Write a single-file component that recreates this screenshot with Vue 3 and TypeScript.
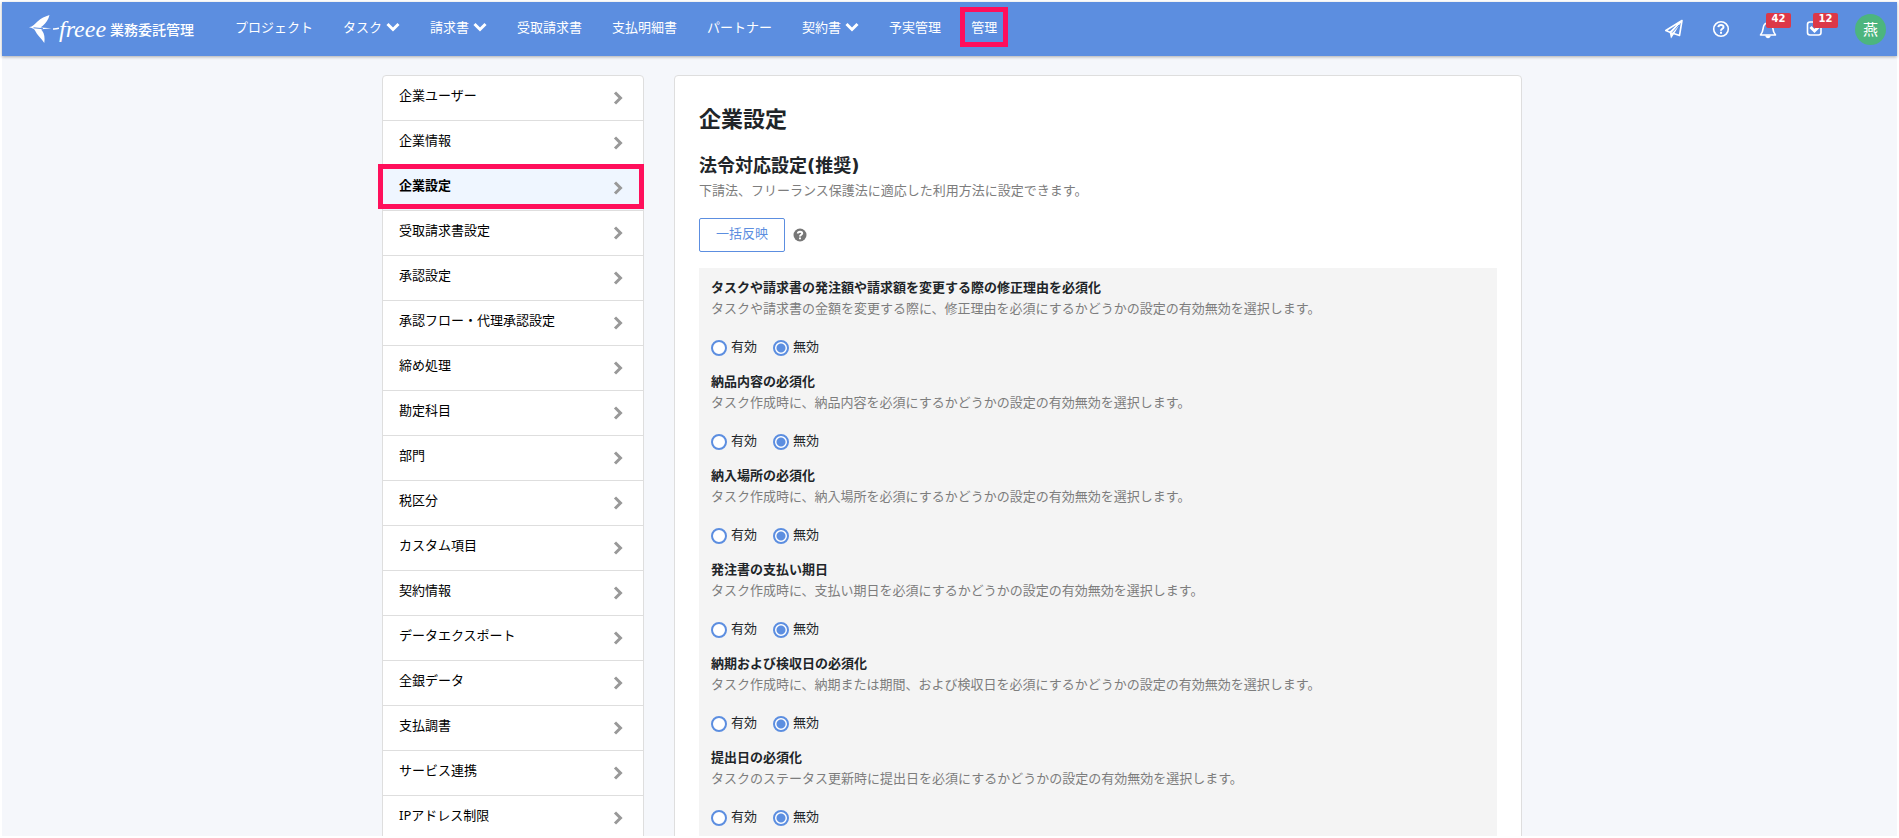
<script setup lang="ts">
import { ref } from 'vue'

interface NavItem {
  label: string
  menu?: boolean
  marked?: boolean
}

interface Setting {
  title: string
  description: string
  value: 'on' | 'off'
}

const navItems: NavItem[] = [
  { label: 'プロジェクト' },
  { label: 'タスク', menu: true },
  { label: '請求書', menu: true },
  { label: '受取請求書' },
  { label: '支払明細書' },
  { label: 'パートナー' },
  { label: '契約書', menu: true },
  { label: '予実管理' },
  { label: '管理', marked: true },
]

const sideItems: string[] = [
  '企業ユーザー',
  '企業情報',
  '企業設定',
  '受取請求書設定',
  '承認設定',
  '承認フロー・代理承認設定',
  '締め処理',
  '勘定科目',
  '部門',
  '税区分',
  'カスタム項目',
  '契約情報',
  'データエクスポート',
  '全銀データ',
  '支払調書',
  'サービス連携',
  'IPアドレス制限',
]
const current = '企業設定'

const settings = ref<Setting[]>([
  {
    title: 'タスクや請求書の発注額や請求額を変更する際の修正理由を必須化',
    description: 'タスクや請求書の金額を変更する際に、修正理由を必須にするかどうかの設定の有効無効を選択します。',
    value: 'off',
  },
  {
    title: '納品内容の必須化',
    description: 'タスク作成時に、納品内容を必須にするかどうかの設定の有効無効を選択します。',
    value: 'off',
  },
  {
    title: '納入場所の必須化',
    description: 'タスク作成時に、納入場所を必須にするかどうかの設定の有効無効を選択します。',
    value: 'off',
  },
  {
    title: '発注書の支払い期日',
    description: 'タスク作成時に、支払い期日を必須にするかどうかの設定の有効無効を選択します。',
    value: 'off',
  },
  {
    title: '納期および検収日の必須化',
    description: 'タスク作成時に、納期または期間、および検収日を必須にするかどうかの設定の有効無効を選択します。',
    value: 'off',
  },
  {
    title: '提出日の必須化',
    description: 'タスクのステータス更新時に提出日を必須にするかどうかの設定の有効無効を選択します。',
    value: 'off',
  },
])
</script>

<template>
  <div class="app">
    <header class="topbar">
      <a class="brand" href="#">
        <svg class="bird" viewBox="0 0 30 28" aria-hidden="true">
          <path d="M0 12.300 C4 11.500 6 9 8.500 6.500 C12 3.200 16 1.500 20.500 0 C19.500 4.500 17 8 13.800 10.800 L11.500 12.500 L22.500 13.300 L13 14.200 C12 14.300 12 14.800 13 15.600 C15.500 18.500 16 23 15.300 28 C12.500 23.500 8 20.500 6 15.600 C5 13.500 3 13 0 12.300 Z" />
          <path class="swash" d="M24 14 C26.500 14.200 28 13.800 30 13.300" />
          <path class="cut" d="M4.500 12.800 L14 13.700" />
        </svg>
        <span class="wordmark">freee</span>
        <span class="product">業務委託管理</span>
      </a>
      <nav class="nav">
        <a v-for="item in navItems" :key="item.label" href="#" :class="{ marked: item.marked }">
          {{ item.label }}
          <svg v-if="item.menu" class="caret" viewBox="0 0 14 10" aria-hidden="true">
            <path d="M1.500 2 L7 7.500 L12.500 2" />
          </svg>
        </a>
      </nav>
      <div class="tools">
        <button type="button" class="tool" aria-label="送信">
          <svg width="20" height="20" viewBox="0 0 20 20" aria-hidden="true">
            <path class="line" d="M18 1.500 L1.800 11.500 L6 13.200 L15.500 16.500 Z M18 1.500 L6.200 13.200" />
            <path class="solid" d="M5.500 13 L17 3 L10 15 L7 19.500 Z" />
            <path class="gap" d="M8.200 13.600 L15 6" />
          </svg>
        </button>
        <button type="button" class="tool" aria-label="ヘルプ">
          <svg width="18" height="18" viewBox="0 0 18 18" aria-hidden="true">
            <circle class="line" cx="9" cy="9" r="7.300" />
            <path class="mark" d="M6.300 7.200 C6.700 4.300 11.700 4.300 11.500 7.200 C11.400 8.800 9 8.800 9 10.700 M9 11.800 V13.800" />
          </svg>
        </button>
        <button type="button" class="tool" aria-label="通知 42件">
          <svg width="18" height="19" viewBox="0 0 18 19" aria-hidden="true">
            <path class="line" d="M1.500 15 C4 12 4 10 4.300 7.500 C4.700 4.700 6.500 3 9 3 C11.500 3 13.300 4.700 13.700 7.500 C14 10 14 12 16.500 15 Z M9 1 V3" />
            <path class="solid" d="M6.300 15.500 H11.700 C11.500 19 6.500 19 6.300 15.500 Z" />
          </svg>
          <span class="badge">42</span>
        </button>
        <button type="button" class="tool" aria-label="タスク 12件">
          <svg width="18" height="18" viewBox="0 0 18 18" aria-hidden="true">
            <rect class="line" x="1.500" y="2" width="13.500" height="13" rx="2.500" />
            <path class="check" d="M4.500 7 L8.500 11 L14 5.500" />
          </svg>
          <span class="badge">12</span>
        </button>
        <button type="button" class="avatar">燕</button>
      </div>
    </header>

    <div class="scroll">
      <div class="layout">
        <nav class="side">
          <ul>
            <li v-for="label in sideItems" :key="label">
              <a href="#" :class="{ active: label === current }">
                <span>{{ label }}</span>
                <svg class="chevron" viewBox="0 0 10 14" aria-hidden="true">
                  <path d="M2 1.500 L7.500 7 L2 12.500" />
                </svg>
              </a>
            </li>
          </ul>
        </nav>

        <main class="card">
          <h1>企業設定</h1>
          <h2>法令対応設定(推奨)</h2>
          <p class="description">下請法、フリーランス保護法に適応した利用方法に設定できます。</p>
          <div class="apply">
            <button type="button" class="outline">一括反映</button>
            <svg class="hint" viewBox="0 0 14 14" aria-hidden="true">
              <circle cx="7" cy="7" r="6.500" />
              <path d="M4.800 5.500 C5 3 9.300 3.100 9.200 5.500 C9.100 6.800 7 6.900 7 8.500 M7 9.500 V11.200" />
            </svg>
          </div>
          <div class="panel">
            <fieldset v-for="(item, i) in settings" :key="item.title">
              <legend>{{ item.title }}</legend>
              <p class="description">{{ item.description }}</p>
              <div class="options">
                <label><input v-model="item.value" type="radio" :name="`setting-${i}`" value="on"><span>有効</span></label>
                <label><input v-model="item.value" type="radio" :name="`setting-${i}`" value="off"><span>無効</span></label>
              </div>
            </fieldset>
          </div>
        </main>
      </div>
    </div>
  </div>
</template>

<style>
body {
  margin: 0;
}
</style>

<style scoped>
.app {
  box-sizing: border-box;
  display: flex;
  flex-direction: column;
  height: 100vh;
  border: 2px solid #fff;
  background: #f5f7fb;
  color: #212529;
  font-family: "Noto Sans", "Noto Sans CJK JP", sans-serif;
  font-size: 13px;
  line-height: 21px;
}

a {
  color: inherit;
  text-decoration: none;
}

button {
  font: inherit;
  cursor: pointer;
}

h1,
h2,
p,
ul {
  margin: 0;
  padding: 0;
}

.topbar {
  position: relative;
  z-index: 1;
  display: flex;
  flex: none;
  align-items: center;
  height: 54px;
  padding: 0 11px 0 27px;
  background: #5c8ee0;
  box-shadow: 0 1px 3px rgba(0, 0, 0, 0.3);
  color: #fff;
}

.brand {
  display: flex;
  align-items: center;
  width: 206px;
}

.bird {
  width: 30px;
  height: 28px;
  fill: #fff;
}

.bird .cut {
  fill: none;
  stroke: #5c8ee0;
  stroke-width: 1;
}

.bird .swash {
  fill: none;
  stroke: #fff;
  stroke-width: 1.5;
}

.wordmark {
  width: 51px;
  font-family: "Liberation Serif", serif;
  font-size: 24px;
  font-style: italic;
}

.product {
  font-size: 14px;
  font-weight: 500;
}

.nav {
  display: flex;
  gap: 30px;
  padding-bottom: 4px;
}

.nav a {
  position: relative;
  display: flex;
  align-items: center;
  gap: 4px;
  white-space: nowrap;
}

.caret {
  width: 14px;
  height: 10px;
  fill: none;
  stroke: #fff;
  stroke-width: 3;
}

.nav .marked::after {
  content: "";
  position: absolute;
  inset: -10px -11px -9px;
  border: 5px solid #ff0f5b;
}

.tools {
  display: flex;
  align-items: center;
  margin-left: auto;
}

.tool {
  position: relative;
  display: flex;
  align-items: center;
  justify-content: center;
  width: 47px;
  height: 32px;
  padding: 0;
  border: 0;
  background: none;
  color: #fff;
}

.tool .line {
  fill: none;
  stroke: #fff;
  stroke-width: 1.6;
  stroke-linejoin: round;
}

.tool .solid {
  fill: #fff;
}

.tool .gap {
  fill: none;
  stroke: #5c8ee0;
  stroke-width: 1;
}

.tool .mark {
  fill: none;
  stroke: #fff;
  stroke-width: 2;
}

.tool .check {
  fill: none;
  stroke: #fff;
  stroke-width: 3;
}

.badge {
  position: absolute;
  top: 0;
  left: 22px;
  width: 25px;
  height: 15px;
  border-radius: 2px;
  background: #dc3848;
  font-family: "DejaVu Sans", sans-serif;
  font-size: 10px;
  font-weight: 700;
  line-height: 11px;
  text-align: center;
}

.avatar {
  width: 31px;
  height: 31px;
  margin-left: 17px;
  padding: 0;
  border: 0;
  border-radius: 50%;
  background: #4cb57e;
  color: #fff;
  font-size: 15px;
}

.scroll {
  flex: 1;
  min-height: 0;
  overflow: auto;
  scrollbar-width: none;
}

.layout {
  display: flex;
  align-items: flex-start;
  gap: 30px;
  max-width: 1140px;
  margin: 0 auto;
  padding: 19px 0 24px 5px;
}

.side {
  box-sizing: border-box;
  flex: none;
  width: 262px;
  border: 1px solid #dedede;
  border-radius: 4px;
  background: #fff;
  color: #000;
}

.side ul {
  list-style: none;
}

.side li + li {
  border-top: 1px solid #dedede;
}

.side a {
  position: relative;
  display: flex;
  align-items: center;
  justify-content: space-between;
  height: 44px;
  padding: 0 20px 0 16px;
}

.side a span {
  padding-bottom: 6px;
}

.side .active {
  background: #eff6ff;
  font-weight: 700;
}

.side .active::after {
  content: "";
  position: absolute;
  inset: -2px -1px 1px -5px;
  border: 5px solid #ff0f5b;
}

.chevron {
  width: 10px;
  height: 14px;
  fill: none;
  stroke: #999;
  stroke-width: 3;
}

.card {
  box-sizing: border-box;
  flex: 1;
  min-width: 0;
  padding: 24px;
  border: 1px solid #dedede;
  border-radius: 4px;
  background: #fff;
}

h1 {
  margin-bottom: 16px;
  font-size: 22px;
  line-height: 36px;
}

h2 {
  font-family: "DejaVu Sans", "Noto Sans CJK JP", sans-serif;
  font-size: 18px;
  line-height: 28px;
}

.description {
  color: #7d7d7d;
}

.apply {
  display: flex;
  align-items: center;
  gap: 8px;
  margin: 17px 0 16px;
}

.outline {
  height: 34px;
  padding: 0 16px 4px;
  border: 1px solid #5c8ee0;
  border-radius: 2px;
  background: #fff;
  color: #5c8ee0;
}

.hint {
  width: 14px;
  height: 14px;
  fill: #777;
}

.hint path {
  fill: none;
  stroke: #fff;
  stroke-width: 2;
}

.panel {
  padding: 9px 12px 24px;
  background: #f4f4f4;
}

fieldset {
  min-width: 0;
  margin: 0;
  padding: 0 0 13px;
  border: 0;
}

legend {
  padding: 0;
  font-weight: 700;
}

.options {
  display: flex;
  gap: 16px;
  margin-top: 19px;
}

.options label {
  display: flex;
  align-items: center;
  gap: 4px;
  height: 20px;
}

.options span {
  padding-bottom: 4px;
}

.options input {
  appearance: none;
  width: 16px;
  height: 16px;
  margin: 0;
  border: 2px solid #5c8ee0;
  border-radius: 50%;
  background: #fff;
}

.options input:checked {
  background: radial-gradient(circle, #5c8ee0 4px, #fff 5px);
}
</style>
